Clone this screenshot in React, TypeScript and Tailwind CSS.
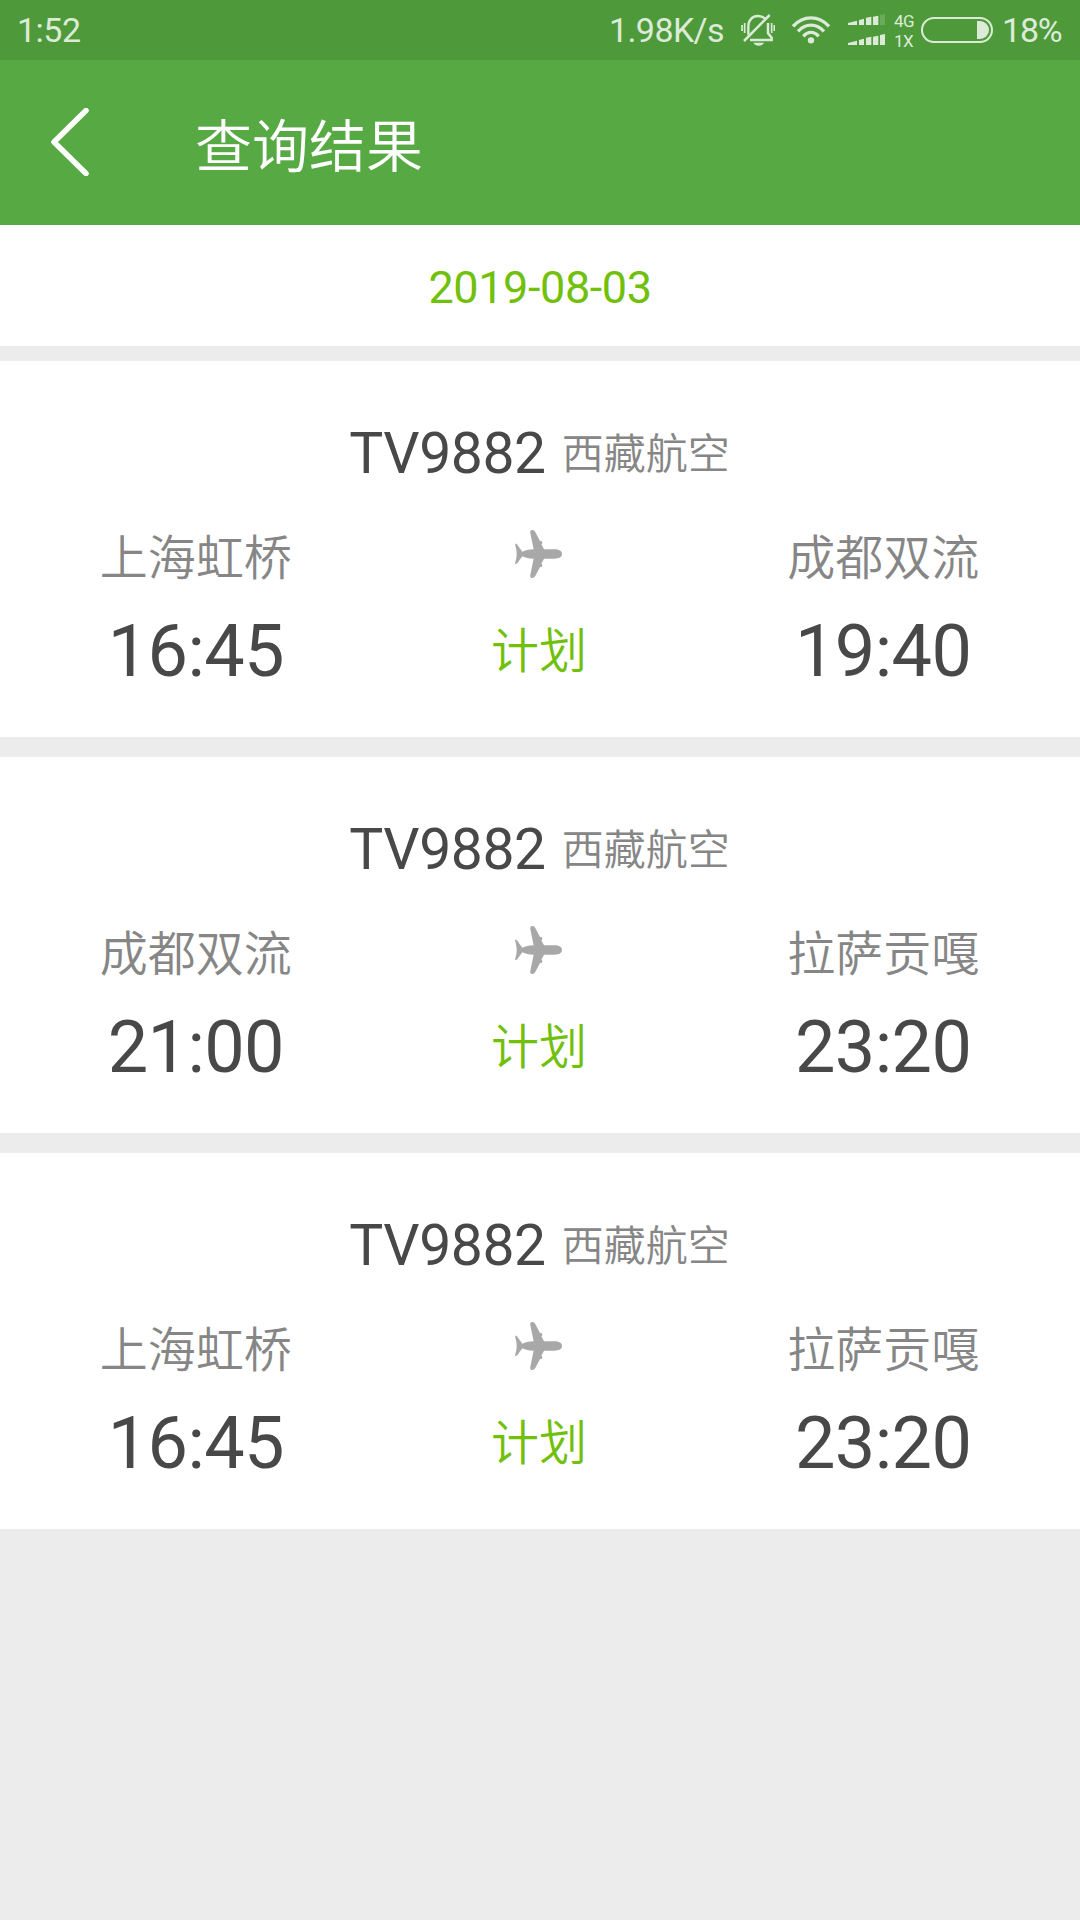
interface Flight {
  id: number;
  flightNo: string;
  airline: string;
  from: string;
  to: string;
  departTime: string;
  arriveTime: string;
  status: string;
}

const flights: Flight[] = [
  { id: 1, flightNo: 'TV9882', airline: '西藏航空', from: '上海虹桥', to: '成都双流', departTime: '16:45', arriveTime: '19:40', status: '计划' },
  { id: 2, flightNo: 'TV9882', airline: '西藏航空', from: '成都双流', to: '拉萨贡嘎', departTime: '21:00', arriveTime: '23:20', status: '计划' },
  { id: 3, flightNo: 'TV9882', airline: '西藏航空', from: '上海虹桥', to: '拉萨贡嘎', departTime: '16:45', arriveTime: '23:20', status: '计划' },
];

const PlaneIcon = () => (
  <svg className="w-[47px] h-12 mr-0.5" viewBox="0 0 141 144" fill="#a8a8a8">
    <path d="M141 72C141 63 132 58 118 58H87L79 43C83 41 83 35 79 33L75 33L62 8C59 2 56 0 52 0C46 0 45 4 46 10L56 58C42 58 30 61 22 65L9 47C6 42 0 40 0 43C3 54 5 62 5 72C5 82 3 90 0 101C0 104 6 102 9 97L22 79C30 83 42 86 56 86L46 134C45 140 46 144 52 144C56 144 59 142 62 136L75 111L79 111C83 109 83 103 79 101L87 86H118C132 86 141 81 141 72Z" />
  </svg>
);

const MuteIcon = () => (
  <svg className="w-[34px] h-8" viewBox="0 0 102 96" fill="none" stroke="#dcebd8">
    <path d="M3 33V51M11 27V57M92 27V57M100 33V51" strokeWidth="5" />
    <path d="M22 62V38C22 18 34 6 51 6C60 6 67 9 73 14" strokeWidth="7" />
    <path d="M81 27V58L92 71V78H27" strokeWidth="7.500" />
    <path d="M86 3L9 81" strokeWidth="7.500" />
    <path d="M37 86H69C66 92 60 95 53 95C46 95 40 92 37 86Z" fill="#dcebd8" stroke="none" />
  </svg>
);

const WifiIcon = () => (
  <svg className="w-[38px] h-7" viewBox="0 0 114 84" fill="none" stroke="#dcebd8" strokeWidth="10">
    <path d="M3 31C34 -3 80 -3 111 31" />
    <path d="M18 46C40 21 74 21 96 46" />
    <path d="M34 61C47 45 67 45 80 61" />
    <circle cx="57" cy="73" r="9.500" fill="#dcebd8" stroke="none" />
  </svg>
);

const SignalIcon = ({ full }: { full: boolean }) => (
  <svg className="w-[37px] h-[11px]" viewBox="0 0 111 33" fill="#dcebd8">
    <path d="M0 27L27 20V33H0ZM33 18L48 14V33H33ZM54 11L70 8V33H54ZM75 8L91 5V33H75Z" />
    <path d="M96 3L111 0V33H96Z" opacity={full ? 1 : 0.2} />
  </svg>
);

const StatusBar = () => (
  <div className="flex items-center h-[60px] bg-[#4e9a3b] text-[#dcebd8] text-[34px] leading-[60px]">
    <span className="ml-[17px] w-[80px] tracking-[-0.5px]">1:52</span>
    <span className="ml-auto tracking-[-0.6px]">1.98K/s</span>
    <div className="ml-[17px] -mt-px"><MuteIcon /></div>
    <div className="ml-[17px]"><WifiIcon /></div>
    <div className="ml-[18px] -mt-px flex flex-col gap-[9px]">
      <SignalIcon full={false} />
      <SignalIcon full />
    </div>
    <div className="ml-[9px] pt-0.5 w-[22px] flex flex-col text-[17px] leading-5 tracking-[-0.5px]">
      <span>4G</span>
      <span>1X</span>
    </div>
    <div className="ml-[5px] w-[72px] h-[26px] rounded-full border-2 border-[#dcebd8] flex items-center justify-end pr-0.5">
      <div className="w-3 h-[18px] rounded-r-full bg-[#dcebd8]"></div>
    </div>
    <span className="ml-[9px] w-[78px] tracking-[-1.2px]">18%</span>
  </div>
);

const FlightCard = ({ flight }: { flight: Flight }) => {
  return (
    <div className="h-[376px] bg-white pl-6 pr-[25px] pt-[58px]">
      <div className="flex justify-center gap-4 leading-[69px]">
        <span className="text-[57px] tracking-[-0.4px] text-[#484848]">{flight.flightNo}</span>
        <span className="font-['Noto_Sans_CJK_SC'] font-[350] text-[42px] leading-[63px] text-[#868686]">{flight.airline}</span>
      </div>
      <div className="mt-[30px] grid grid-cols-3 items-center justify-items-center font-['Noto_Sans_CJK_SC'] font-[350] text-[48px] leading-[72px] text-[#868686]">
        <span>{flight.from}</span>
        <PlaneIcon />
        <span>{flight.to}</span>
      </div>
      <div className="mt-5 grid grid-cols-3 justify-items-center text-[72px] leading-[83px] tracking-[-0.6px] text-[#484848]">
        <span>{flight.departTime}</span>
        <span className="mr-px font-['Noto_Sans_CJK_SC'] font-[350] text-[48px] leading-[74px] tracking-normal text-[#70c00c]">{flight.status}</span>
        <span>{flight.arriveTime}</span>
      </div>
    </div>
  );
};

const App = () => {
  return (
    <div className="w-[1080px] h-[1920px] overflow-hidden bg-[#ececec] font-[Roboto,'Noto_Sans_CJK_SC',sans-serif]">
      <StatusBar />
      <header className="flex items-center h-[165px] bg-[#56a943] text-white">
        <svg className="ml-[51px] mb-px w-[38px] h-[68px]" viewBox="0 0 38 68" fill="none" stroke="white" strokeWidth="5.500" strokeLinecap="round" strokeLinejoin="round">
          <path d="M35 2.500L3 34L35 65.500" />
        </svg>
        <h1 className="ml-[106px] pt-px font-['Noto_Sans_CJK_SC'] font-[350] text-[57px]">查询结果</h1>
      </header>
      <div className="h-[121px] bg-white text-center text-[45px] leading-[125px] tracking-[-0.4px] text-[#70c00c]">2019-08-03</div>
      <div className="mt-[15px] flex flex-col gap-5">
        {flights.map((flight) => (
          <FlightCard key={flight.id} flight={flight} />
        ))}
      </div>
    </div>
  );
};

export default App;
